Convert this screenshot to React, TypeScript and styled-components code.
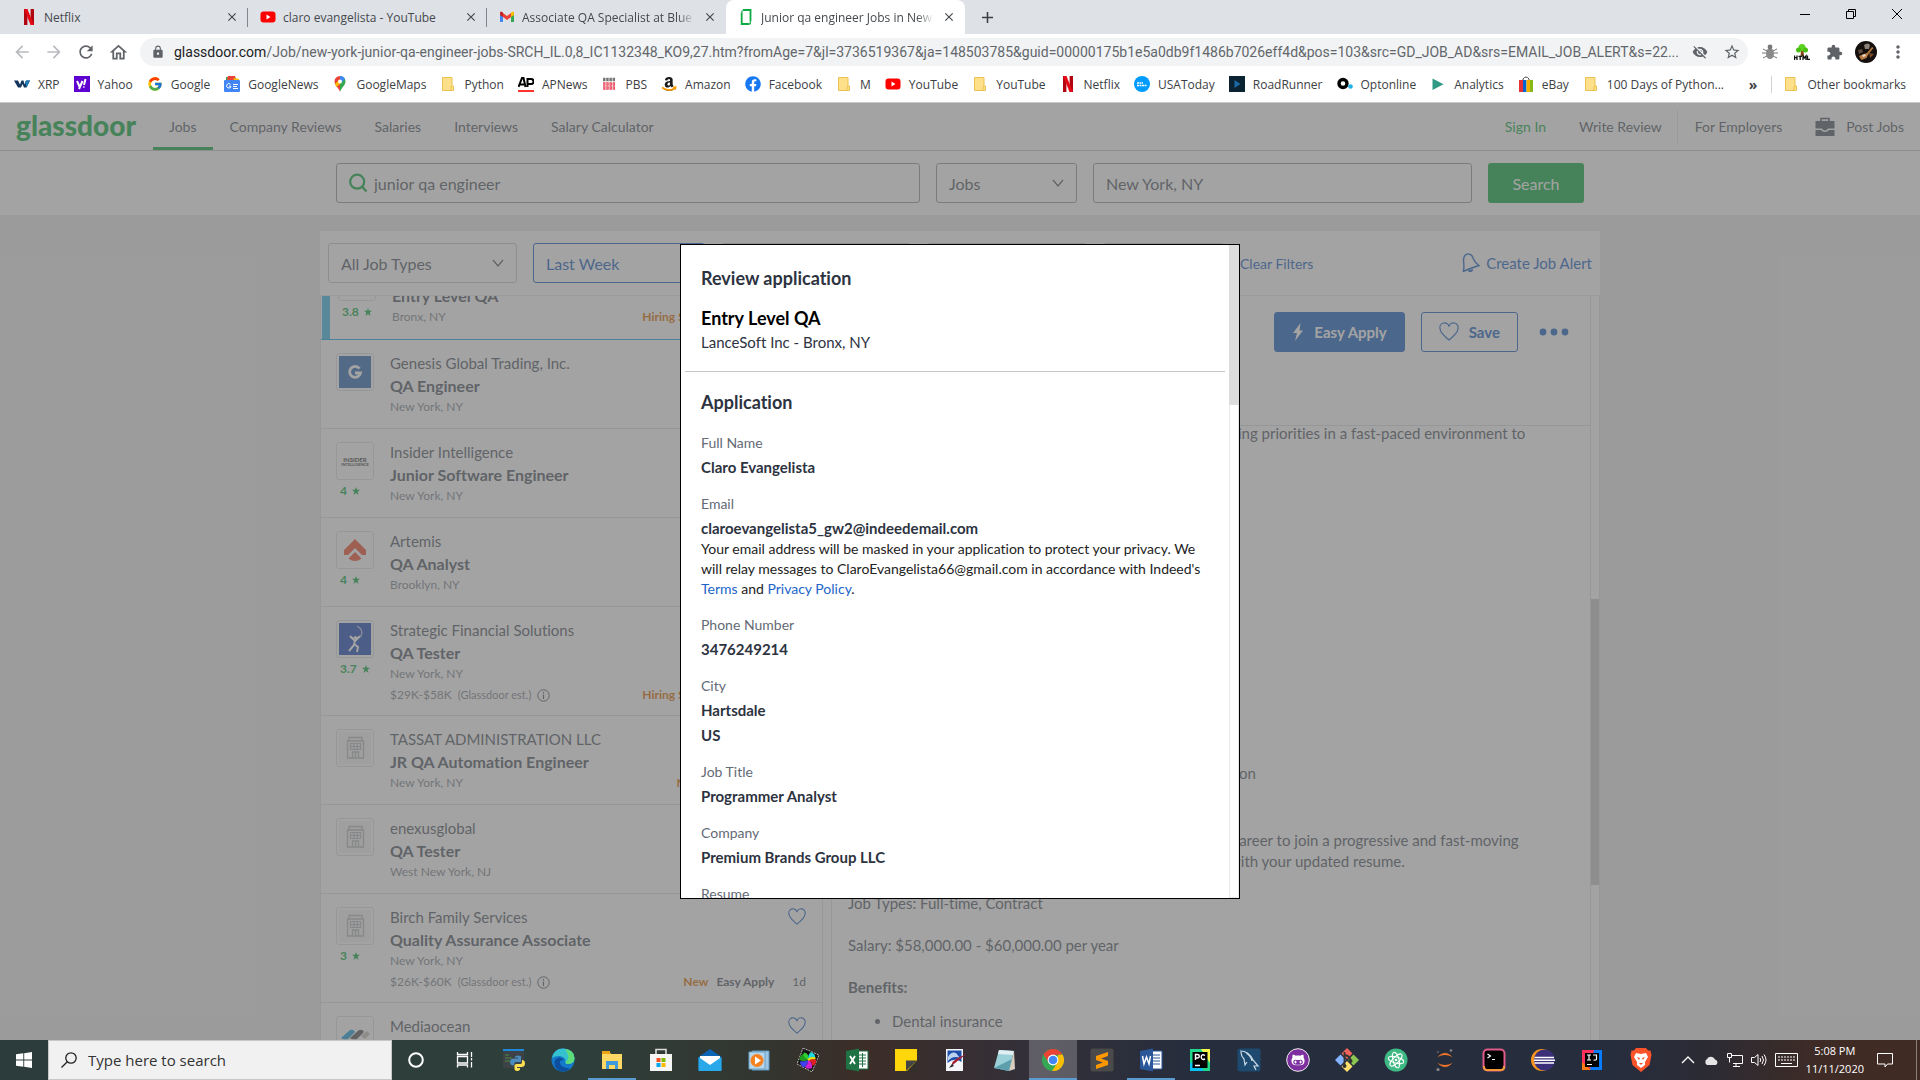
import React from "react";
import styled, { createGlobalStyle, css } from "styled-components";
import {
  MdArrowBack, MdArrowForward, MdRefresh, MdOutlineHome, MdLock, MdExtension,
  MdStarBorder, MdMoreVert, MdVisibilityOff, MdClose, MdAdd,
} from "react-icons/md";
import { FaFacebook, FaAmazon, FaGithubAlt } from "react-icons/fa";
import { FcGoogle } from "react-icons/fc";

const ui = '"Open Sans", "Noto Sans", sans-serif';
const lato = 'Lato, "Liberation Sans", sans-serif';
const green = "#0caa41";
const blue = "#1861bf";

const Global = createGlobalStyle`
  * { box-sizing: border-box; }
  html, body { margin: 0; overflow: hidden; }
  body { font-family: ${lato}; color: #505863; font-variant-ligatures: none; }
  button, input, select { font: inherit; color: inherit; margin: 0; }
  button { background: none; border: 0; padding: 0; }
  a { color: inherit; text-decoration: none; }
  h1, h2, h3, p, ul, dl, dd { margin: 0; padding: 0; }
  svg { display: block; flex: none; }
`;

const Screen = styled.div`
  height: 100vh;
  display: flex;
  flex-direction: column;
`;

/* ---------- browser frame ---------- */

const Browser = styled.header`
  flex: none;
  font-family: ${ui};
  background: #fff;
  border-bottom: 1px solid #c8c8c8;
`;
const TabStrip = styled.div`
  display: flex;
  height: 34px;
  background: #dee1e6;
`;
const Tab = styled.div<{ $active?: boolean; $line?: boolean }>`
  display: flex;
  align-items: center;
  gap: 7px;
  width: 239px;
  padding: 0 8px 0 12px;
  font-size: 12px;
  color: #45494d;
  &:first-child { width: 248px; padding-left: 21px; }
  ${(p) => p.$line && css`
    background: linear-gradient(#80868b, #80868b) right 8px / 1px 19px no-repeat;
  `}
  ${(p) => p.$active && css`
    background: #fff;
    border-radius: 8px 8px 0 0;
  `}
`;
const TabTitle = styled.a<{ $fade?: boolean }>`
  flex: 1;
  min-width: 0;
  overflow: hidden;
  white-space: nowrap;
  ${(p) => p.$fade && css`
    mask-image: linear-gradient(90deg, #000 90%, transparent 100%);
  `}
`;
const IconButton = styled.button<{ $w?: number; $c?: string }>`
  display: flex;
  align-items: center;
  justify-content: center;
  flex: none;
  width: ${(p) => p.$w ?? 32}px;
  height: 100%;
  color: ${(p) => p.$c ?? "#5f6368"};
`;
const WindowButtons = styled.div`
  display: flex;
  height: 28px;
  margin-left: auto;
`;
const Toolbar = styled.div`
  display: flex;
  align-items: center;
  height: 36px;
  padding: 0 6px;
`;
const Omnibox = styled.label`
  flex: 1;
  min-width: 0;
  display: flex;
  align-items: center;
  height: 28px;
  margin: 0 6px;
  padding-left: 11px;
  border-radius: 14px;
  background: #f1f3f4;
  color: #202124;
  font-family: Roboto, "Open Sans", sans-serif;
  font-size: 14px;
  svg { color: #5f6368; }
`;
const Domain = styled.span`
  margin-left: 9px;
`;
const UrlInput = styled.input`
  flex: 1;
  min-width: 0;
  padding: 0;
  border: 0;
  outline: 0;
  background: none;
  color: #63676c;
  text-overflow: ellipsis;
`;
const Bookmarks = styled.nav`
  display: flex;
  align-items: center;
  height: 32px;
  padding: 0 14px 4px;
  gap: 14px;
  font-size: 12px;
  color: #3c4043;
`;
const Bookmark = styled.a`
  display: flex;
  align-items: center;
  gap: 8px;
  white-space: nowrap;
`;
const BookmarkEnd = styled.div`
  display: flex;
  align-items: center;
  gap: 14px;
  margin-left: auto;
  & > span { font-weight: 700; font-size: 14px; }
  & > a { border-left: 1px solid #cfd1d4; padding-left: 11px; }
`;

/* ---------- job site ---------- */

const Site = styled.main`
  position: relative;
  flex: 1;
  min-height: 0;
  overflow: hidden;
  display: flex;
  flex-direction: column;
  background: #ebebeb;
`;
const SiteNav = styled.nav`
  flex: none;
  display: flex;
  align-items: stretch;
  gap: 1px;
  height: 48px;
  padding: 0 16px;
  background: #fff;
  border-bottom: 1px solid #c4c7cc;
  font-size: 14px;
`;
const Wordmark = styled.a`
  width: 136px;
  font-size: 28px;
  line-height: 44px;
  font-weight: 900;
  color: ${green};
`;
const NavLink = styled.a<{ $active?: boolean; $green?: boolean; $rule?: boolean }>`
  display: flex;
  align-items: center;
  gap: 11px;
  padding: 0 16px;
  padding-top: ${(p) => (p.$active ? 3 : 0)}px;
  border-bottom: ${(p) => (p.$active ? `3px solid ${green}` : "0")};
  color: ${(p) => (p.$green ? green : "inherit")};
  ${(p) => p.$rule && css`
    background: linear-gradient(#e8e8e8, #e8e8e8) right center / 1px 34px no-repeat;
  `}
  &:last-child { padding-right: 0; }
`;
const Push = styled.div`
  flex: 1;
`;
const SearchBar = styled.form`
  flex: none;
  display: flex;
  justify-content: center;
  gap: 16px;
  padding: 12px 336px;
  background: #fff;
  font-size: 16px;
`;
const Field = styled.label<{ $grow?: number; $w?: number; $blue?: boolean; $soft?: boolean }>`
  display: flex;
  align-items: center;
  gap: 5px;
  height: 40px;
  flex: ${(p) => (p.$grow ? `${p.$grow} 1 ${p.$grow}px` : "none")};
  ${(p) => p.$w && css`width: ${p.$w}px;`}
  padding: 0 12px;
  border: 1px solid ${(p) => (p.$blue ? blue : p.$soft ? "#c4c7cc" : "#95989e")};
  border-radius: 3px;
  color: ${(p) => (p.$blue ? blue : "inherit")};
  input, select {
    flex: 1;
    min-width: 0;
    border: 0;
    padding: 0;
    outline: 0;
    background: none;
    appearance: none;
  }
`;
const PrimaryButton = styled.button`
  width: 96px;
  height: 40px;
  border-radius: 3px;
  background: ${green};
  color: #fff;
`;
const Panel = styled.section`
  flex: 1;
  min-height: 0;
  display: flex;
  flex-direction: column;
  margin: 16px 320px 0;
  background: #fff;
`;
const Filters = styled.div`
  flex: none;
  display: flex;
  align-items: center;
  gap: 16px;
  padding: 12px 8px;
  height: 65px;
  border-bottom: 1px solid #eaebed;
  font-size: 16px;
`;
const FilterLink = styled.a<{ $size: number }>`
  display: flex;
  align-items: center;
  gap: 6px;
  font-size: ${(p) => p.$size}px;
  color: ${blue};
`;
const Columns = styled.div`
  flex: 1;
  min-height: 0;
  display: flex;
`;
const JobList = styled.ul`
  width: 503px;
  overflow: hidden;
  list-style: none;
  display: flex;
  flex-direction: column;
  justify-content: flex-start;
  border: 1px solid #dee0e3;
  border-width: 0 1px;
`;
const JobItem = styled.li<{ $current?: boolean }>`
  flex: none;
  display: flex;
  gap: 16px;
  padding: 13px 16px 10px 15px;
  border-bottom: 1px solid #dee0e3;
  ${(p) => p.$current && css`
    margin-top: -45px;
    padding: 12px 16px 11px 17px;
    border-bottom: 1px solid #1ba6df;
    background: linear-gradient(90deg, #fff 1px, #3cb8e8 1px, #3cb8e8 9px, #fff 9px);
  `}
`;
const LogoColumn = styled.div`
  width: 38px;
`;
const LogoBox = styled.div`
  display: flex;
  align-items: center;
  justify-content: center;
  height: 38px;
  border: 1px solid #dee0e3;
  border-radius: 3px;
`;
const Rating = styled.span`
  display: flex;
  align-items: center;
  gap: 5px;
  padding-left: 4px;
  font-size: 12px;
  line-height: 22px;
  font-weight: 700;
  color: ${green};
`;
const JobBody = styled.div`
  flex: 1;
  min-width: 0;
`;
const Line = styled.div`
  display: flex;
  justify-content: space-between;
  gap: 8px;
`;
const Company = styled(Line)`
  font-size: 15px;
  line-height: 20px;
`;
const JobTitle = styled.a`
  display: block;
  font-size: 16px;
  line-height: 26px;
  font-weight: 700;
`;
const Place = styled(Line)`
  font-size: 12px;
  line-height: 16px;
  margin-bottom: 3px;
  color: #7f868f;
`;
const Pay = styled(Place)`
  line-height: 20px;
  margin-bottom: 0;
`;
const PayText = styled.span`
  display: flex;
  align-items: center;
  gap: 6px;
`;
const Estimate = styled.span`
  font-size: 11px;
`;
const Meta = styled.span`
  display: flex;
  gap: 8px;
  font-weight: 700;
  color: #505863;
`;
const Hot = styled.span`
  color: #dc6f00;
`;
const Age = styled.span`
  padding-left: 10px;
  font-weight: 400;
`;
const Detail = styled.article`
  flex: 1;
  min-width: 0;
  margin-left: 8px;
  display: flex;
  flex-direction: column;
  border-left: 1px solid #dee0e3;
`;
const DetailHead = styled.div`
  flex: none;
  display: flex;
  justify-content: flex-end;
  gap: 16px;
  height: 130px;
  padding: 16px;
  border-bottom: 1px solid #dee0e3;
`;
const ActionButton = styled.button<{ $solid?: boolean }>`
  display: flex;
  align-items: center;
  justify-content: center;
  gap: 10px;
  height: 40px;
  padding: 0 17px;
  border: 1px solid ${blue};
  border-radius: 3px;
  font-size: 15px;
  font-weight: 700;
  background: ${(p) => (p.$solid ? blue : "transparent")};
  color: ${(p) => (p.$solid ? "#fff" : blue)};
`;
const MoreButton = styled.button`
  height: 40px;
  padding: 0 5px;
  color: ${blue};
`;
const Description = styled.div`
  flex: 1;
  min-height: 0;
  overflow: hidden;
  padding: 0 16px;
  font-size: 15px;
  line-height: 21px;
`;
const Block = styled.p<{ $gap?: number; $indent?: number; $bold?: boolean }>`
  margin-top: ${(p) => p.$gap ?? 0}px;
  padding-left: ${(p) => p.$indent ?? 0}px;
  font-weight: ${(p) => (p.$bold ? 700 : 400)};
  white-space: nowrap;
`;
const Bullets = styled.ul`
  margin-top: 13px;
  padding-left: 44px;
`;
const Track = styled.div`
  width: 10px;
  padding-top: 303px;
  border: 1px solid #dee0e3;
  border-width: 0 1px;
`;
const Thumb = styled.div`
  height: 286px;
  background: #c9c9c9;
`;

/* ---------- review dialog ---------- */

const Shade = styled.div`
  position: absolute;
  inset: 0;
  display: flex;
  align-items: center;
  justify-content: center;
  background: rgba(107, 107, 107, 0.62);
`;
const Dialog = styled.section`
  display: flex;
  width: 560px;
  height: 655px;
  max-height: 100%;
  border: 1px solid #000;
  background: #fff;
  color: #2d333f;
  overflow: hidden;
`;
const DialogBody = styled.div`
  flex: 1;
  min-width: 0;
  padding: 0 4px;
`;
const DialogHead = styled.div`
  padding: 21px 16px 17px;
  border-bottom: 1px solid #c4c7cc;
`;
const Heading = styled.h2<{ $black?: boolean }>`
  margin-bottom: ${(p) => (p.$black ? 0 : 16)}px;
  font-size: 18px;
  line-height: 24px;
  font-weight: 700;
  color: ${(p) => (p.$black ? "#000" : "inherit")};
`;
const SubHeading = styled.p`
  font-size: 15px;
  line-height: 24px;
`;
const DialogSection = styled.div`
  padding: 18px 16px 0;
`;
const Entry = styled.dl`
  display: flex;
  flex-direction: column;
  margin-bottom: 13px;
  dt { font-size: 14px; line-height: 26px; color: #646a75; }
  dd { font-size: 15px; line-height: 22px; font-weight: 700; }
  dd + dd { margin-top: 3px; }
`;
const Note = styled.p`
  font-size: 14px;
  line-height: 20px;
  color: #222;
  a { color: #2164c9; }
`;
const DialogTrack = styled.div`
  width: 10px;
  border: 1px solid #e8e8e8;
`;
const DialogThumb = styled.div`
  height: 160px;
  margin: -1px;
  background: #dcdcdc;
`;

/* ---------- taskbar ---------- */

const Taskbar = styled.footer`
  flex: none;
  display: flex;
  height: 40px;
  font-family: ${ui};
  color: #fff;
  background: linear-gradient(90deg, #2c3b3b 0%, #2e3f3b 30%, #33352f 40%, #3c2d28 45%, #33303a 54%, #262d3c 62%, #262d3d 84%, #2c2b34 89%, #3f2b25 95%, #402b24 100%);
`;
const StartButton = styled.button`
  width: 48px;
  display: flex;
  align-items: center;
  justify-content: center;
`;
const TaskSearch = styled.label`
  display: flex;
  align-items: center;
  gap: 11px;
  width: 344px;
  padding: 0 12px;
  background: #f1f1f1;
  border: 1px solid #c6c6c6;
  color: #222;
  font-size: 15px;
  input { flex: 1; min-width: 0; border: 0; padding: 0; background: none; outline: 0; }
  input::placeholder { color: #333; opacity: 1; }
`;
const Apps = styled.div`
  display: flex;
  gap: 1px;
`;
const AppButton = styled.button<{ $state?: "open" | "front" }>`
  width: 48px;
  display: flex;
  align-items: center;
  justify-content: center;
  background: ${(p) => (p.$state === "front" ? "rgba(255,255,255,0.22)" : "transparent")};
  box-shadow: ${(p) => (p.$state ? "inset 0 -2px #5a9bd0" : "none")};
`;
const Tray = styled.div`
  display: flex;
  align-items: center;
  gap: 8px;
  margin-left: auto;
  padding-right: 3px;
`;
const Clock = styled.time`
  font-size: 11px;
  line-height: 18px;
  text-align: center;
`;
const ShowDesktop = styled.button`
  width: 11px;
  height: 40px;
  border-right: 1px solid #8a7f7b;
`;

/* ---------- drawings ---------- */

type Draw = { s?: number; children?: React.ReactNode; w?: number; box?: string };
const Svg = ({ s = 16, w, box = "0 0 16 16", children }: Draw) => (
  <svg width={w ?? s} height={s} viewBox={box} aria-hidden="true">{children}</svg>
);
const Big = ({ children }: { children: React.ReactNode }) => (
  <Svg s={24} box="0 0 24 24">{children}</Svg>
);

const NetflixMark = () => (
  <Svg>
    <path d="M3 0h3.400v16H3zM9.600 0H13v16H9.600z" fill="#b1060f" />
    <path d="M3 0h3.400L13 16H9.600z" fill="#e50914" />
  </Svg>
);
const YouTubeMark = () => (
  <Svg>
    <rect x="0.500" y="2.500" width="15" height="11" rx="3" fill="#f00" />
    <path d="M6.500 5.500v5l4-2.500z" fill="#fff" />
  </Svg>
);
const GmailMark = () => (
  <Svg>
    <path d="M1 4v9h3V6.500z" fill="#4285f4" />
    <path d="M15 4v9h-3V6.500z" fill="#34a853" />
    <path d="M12 3.500l2-1q1 0 1 1.500v2l-3 2z" fill="#fbbc04" />
    <path d="M4 3.500l-2-1Q1 2.500 1 4v2l3 2z" fill="#c5221f" />
    <path d="M4 4l4 3 4-3v4l-4 3-4-3z" fill="#ea4335" />
  </Svg>
);
const GlassdoorMark = () => (
  <Svg>
    <path d="M4.800 1H12.500V12.500M11 15H3.700V3.500" fill="none" stroke="#0caa41" strokeWidth="1.800" />
    <path d="M4 3.500V1.500M12.300 12.500V15H10" fill="none" stroke="#0caa41" strokeWidth="1.200" />
  </Svg>
);
const FolderMark = () => (
  <Svg>
    <path d="M2.500 1.500h9.500v13H2.500z" fill="#ffe08a" stroke="#e9c250" />
    <path d="M12 10h1.500v4.500H11V11z" fill="#ffe08a" stroke="#e9c250" />
  </Svg>
);
const XrpMark = () => (
  <Svg>
    <path d="M0 4.500h4l2 4 1.500-4h2l1 4 1.500-4h4l-3.500 7H10L8.500 8 7 11.500H4z" fill="#12345c" />
    <path d="M11 6l1.500-1.500H16l-3.500 7z" fill="#1d7db5" />
  </Svg>
);
const YahooMark = () => (
  <Svg>
    <rect width="16" height="16" fill="#5f01d1" />
    <path d="M3 5l2.500 5.500M8.500 5L5 13M11.500 3L10 9M9.400 11h1" stroke="#fff" strokeWidth="2" fill="none" />
  </Svg>
);
const NewsMark = () => (
  <Svg>
    <path d="M2 1h9l3 4H2z" fill="#34a853" />
    <path d="M4 0h7l1 4H3z" fill="#ea4335" />
    <path d="M10 2l5 1v3H9z" fill="#fbbc04" />
    <rect y="4" width="16" height="12" rx="1" fill="#4285f4" />
    <path d="M6.500 8.400A2.200 2.200 0 1 0 7 10.300H5M9 8.500h5M9 10.500h4M9 12.500h5" stroke="#fff" fill="none" />
  </Svg>
);
const MapsMark = () => (
  <Svg>
    <path d="M8 16C7 12 2.500 9.500 2.500 5.500A5.500 5.500 0 0 1 8 0z" fill="#ea4335" />
    <path d="M8 0a5.500 5.500 0 0 1 5.500 5.500C13.500 9.500 9 12 8 16z" fill="#34a853" />
    <path d="M8 0a5.500 5.500 0 0 1 5 3L8 8z" fill="#4285f4" />
    <path d="M3 8l4-4 2 3-4.500 4z" fill="#fbbc04" />
    <circle cx="8" cy="5.500" r="2" fill="#fff" />
  </Svg>
);
const ApMark = () => (
  <Svg>
    <path d="M0.500 11L4 2h1.500L7.500 11M2 8.500h4M9.500 11V3h3.500a2 2 0 0 1 0 5H10" stroke="#000" strokeWidth="2" fill="none" />
    <path d="M0 14h16v2H0z" fill="#ff322e" />
  </Svg>
);
const PbsMark = () => (
  <Svg>
    <path d="M2 3.500h12" stroke="#777" strokeWidth="3.500" strokeDasharray="2.500 0.700" />
    <path d="M2 8h12M2 12h12" stroke="#e8475a" strokeWidth="3.400" strokeDasharray="2.500 0.700" />
    <path d="M2 8h12M2 12h12" stroke="#f9c9cf" strokeWidth="0.800" strokeDasharray="1.500 1.700" />
  </Svg>
);
const UsaMark = () => (
  <Svg>
    <circle cx="8" cy="8" r="8" fill="#009bff" />
    <path d="M3 7h6M3 9.500h10" stroke="#fff" strokeWidth="1.500" strokeDasharray="2 0.500" />
  </Svg>
);
const RoadMark = () => (
  <Svg><rect width="16" height="16" fill="#0b2233" /><path d="M5.500 4v8l6-4z" fill="#1c68a6" /></Svg>
);
const OptMark = () => (
  <Svg>
    <circle cx="6" cy="7.500" r="4" fill="none" stroke="#000" strokeWidth="3.400" />
    <circle cx="13.500" cy="10.500" r="2.300" fill="#1db3e6" />
  </Svg>
);
const AnalyticsMark = () => <Svg><path d="M2.500 2.500v11.500l11-5.700z" fill="#2f9a83" /></Svg>;
const EbayMark = () => (
  <Svg>
    <path d="M5 5V3q3-4 6 0v2" stroke="#444" fill="none" />
    <path d="M1 4h4v12H1z" fill="#e53238" /><path d="M5 4h3.500v12H5z" fill="#0064d2" />
    <path d="M8.500 4H12v12H8.500z" fill="#f5af02" /><path d="M12 4h3v12h-3z" fill="#86b817" />
  </Svg>
);
const AmazonMark = () => (
  <Svg>
    <FaAmazon size={16} color="#1a1a1a" />
    <path d="M1 11.500q7 5 13 0.500M12 11.200l2.700-.2-.5 2.700" fill="none" stroke="#ff9900" strokeWidth="1.600" />
  </Svg>
);
const FacebookMark = () => <FaFacebook size={16} color="#1778f2" />;
const GoogleMark = () => <FcGoogle size={16} />;

const BugMark = () => (
  <Svg>
    <ellipse cx="8" cy="9.500" rx="4" ry="5.500" fill="#8a8a8a" />
    <circle cx="8" cy="3" r="2.400" fill="#777" />
    <path d="M1 5l4 2M0 9h4M1 14l4-2M15 5l-4 2M16 9h-4M15 14l-4-2" stroke="#777" />
  </Svg>
);
const TreeMark = () => (
  <Svg>
    <path d="M7 6h2.500l0.500 6H6.500z" fill="#8a4b1c" />
    <circle cx="8" cy="3.500" r="3.500" fill="#5bd21b" /><circle cx="4.500" cy="6" r="2.500" fill="#49bd13" />
    <circle cx="11.500" cy="6" r="2.500" fill="#49bd13" />
    <path d="M0.500 11.500v4.500M3 11.500v4.500M0.500 13.700H3M4.500 12.300H8M6.200 12v4M9 16v-4l1.500 2 1.500-2v4M13.500 11.500v3.800h2.500" stroke="#111" strokeWidth="1.300" fill="none" />
  </Svg>
);
const Avatar = () => (
  <Svg s={22} box="0 0 22 22">
    <circle cx="11" cy="11" r="11" fill="#15100e" />
    <path d="M9 4q4-3 6 0l-1 4h-4z" fill="#8a8078" />
    <path d="M4 15l5-2 3-1 5-6 1.500 1-5 6-2 4-5 2z" fill="#b97c42" />
    <path d="M7 14l3-1 1 2-3 1z" fill="#e7d9c8" />
    <path d="M14 12l5 1-4 4z" fill="#7c4a27" />
    <path d="M3 9l4-1 1 3-4 2z" fill="#5b4a3d" />
  </Svg>
);
const Search = ({ c, s = 20 }: { c: string; s?: number }) => (
  <Svg s={s} box="0 0 20 20">
    <circle cx="8.200" cy="8.700" r="7" fill="none" stroke={c} strokeWidth="2.200" />
    <path d="M13 13.500l4.500 5" stroke={c} strokeWidth="2.400" />
  </Svg>
);
const Chevron = () => (
  <Svg s={12} box="0 0 12 12">
    <path d="M1 3l5 6 5-6" fill="none" stroke="#505863" strokeWidth="1.200" />
  </Svg>
);
const Heart = ({ s = 18 }: { s?: number }) => (
  <Svg s={s} box="0 0 20 20">
    <path d="M10 18C5 14 1 10.500 1 6.500A4.600 4.600 0 0 1 10 4.500a4.600 4.600 0 0 1 9 2C19 10.500 15 14 10 18z" fill="none" stroke={blue} strokeWidth="1.200" />
  </Svg>
);
const Star = () => (
  <Svg s={8} box="0 0 10 10"><path d="M5 0l1.300 3.500H10L7 5.900 8.200 10 5 7.500 1.800 10 3 5.900 0 3.500h3.700z" fill={green} /></Svg>
);
const Info = () => (
  <Svg s={13} box="0 0 13 13">
    <circle cx="6.500" cy="6.500" r="5.700" fill="none" stroke="#505863" />
    <path d="M6.500 5.500v4.500M6.500 3v1.400" stroke="#505863" strokeWidth="1.200" />
  </Svg>
);
const Briefcase = () => (
  <Svg s={20} box="0 0 20 20">
    <path d="M6 4V1.500h8V4" fill="none" stroke="#505863" strokeWidth="1.600" />
    <path d="M0.500 4h19v7.500h-6.500q-1 2-3 2t-3-2H0.500zM0.500 13h5.500q1.500 2 4 2t4-2h5.500v6h-19z" fill="#505863" />
  </Svg>
);
const Bell = () => (
  <Svg s={20} w={18} box="0 0 18 20">
    <path d="M1 18.500Q2.500 17 1.500 7 2 0.700 6.500 1q3.500 0 5 5 1.500 4 5.500 6.500Q9 15 1 18.500z" fill="none" stroke={blue} strokeWidth="1.400" />
    <path d="M6 17.500l5-1.500q0 3.500-3 3-2 0-2-1.500z" fill={blue} />
  </Svg>
);
const Bolt = () => (
  <Svg s={18} w={12} box="0 0 12 18"><path d="M8.500 0L1 10h4L3 18l8-10.500H7.500z" fill="#fff" /></Svg>
);
const Dots = () => (
  <Svg s={8} w={30} box="0 0 30 8">
    <circle cx="4" cy="4" r="3.400" fill={blue} /><circle cx="15" cy="4" r="3.400" fill={blue} /><circle cx="26" cy="4" r="3.400" fill={blue} />
  </Svg>
);

const GenesisLogo = () => (
  <Svg s={32} box="0 0 32 32">
    <rect width="32" height="32" fill="#2f6bb5" />
    <path d="M20.500 12.500a5.500 5.500 0 1 0 1 4.500H16" fill="none" stroke="#fff" strokeWidth="2.800" />
  </Svg>
);
const InsiderLogo = () => (
  <Svg s={32} box="0 0 32 32">
    <g fill="#333" fontFamily="Lato, sans-serif" textAnchor="middle">
      <text x="16" y="17" fontSize="6" fontWeight="700">INSIDER</text>
      <text x="16" y="21" fontSize="4" fontWeight="700">INTELLIGENCE</text>
    </g>
  </Svg>
);
const ArtemisLogo = () => (
  <Svg s={32} box="0 0 32 32">
    <path d="M16 5l11 11v5h-4l-7-7-7 7H5v-5z" fill="#f0502c" />
    <path d="M16 18l6.500 6.500q-6.500 5-13 0z" fill="#f0502c" />
  </Svg>
);
const StrategicLogo = () => (
  <Svg s={32} box="0 0 32 32">
    <rect width="32" height="32" fill="#1b49b8" />
    <path d="M18 3q7 4 4 10-4 4-11 1" fill="none" stroke="#b9c4df" strokeWidth="1.400" />
    <path d="M21 13l-5 5-5-5M16 17l-1 5-5 6M15 21l4 3-1 5" fill="none" stroke="#fff" strokeWidth="2" />
    <circle cx="16.500" cy="14.500" r="1.600" fill="#fff" />
  </Svg>
);
const BuildingLogo = () => (
  <Svg s={32} box="0 0 32 32">
    <rect width="32" height="32" fill="#f5f5f5" />
    <path d="M8.500 9h16v17h-16zM10 5.500h13V9H10zM13.500 26v-6h6v6M16.500 20v6" fill="none" stroke="#b4b7bb" strokeWidth="1.300" />
    <path d="M11.500 11.500h10v6h-10zM11.500 14.500h10M15 11.500v6M18.300 11.500v6" fill="none" stroke="#b4b7bb" strokeWidth="1.200" />
  </Svg>
);
const MediaLogo = () => (
  <Svg s={32} box="0 0 32 32">
    <path d="M22 17l6-5 3 3-5 5z" fill="#c8c3b8" />
    <path d="M2 19l9-8q4-1 5 2l-7 7q-5 1-7-1z" fill="#17a0dc" />
    <path d="M11 19l9-8q4-1 5 2l-7 7q-5 1-7-1z" fill="#555" />
  </Svg>
);
const LanceLogo = () => <Svg s={32} box="0 0 32 32"><circle cx="16" cy="14" r="8" fill="#7aa5d8" /></Svg>;

const apps: { name: string; state?: "open" | "front"; art: React.ReactNode }[] = [
  { name: "Cortana", art: <Big><circle cx="12" cy="12" r="6.800" fill="none" stroke="#fff" strokeWidth="2" /></Big> },
  { name: "Task view", art: <Big><path d="M4.500 4v2.500h10V4M4.500 19.500V17h10v2.500M4.500 8.500h10v6.500h-10zM18.500 4v5M18.500 14v5.500M18.500 10v2.500" fill="none" stroke="#fff" strokeWidth="1.300" /></Big> },
  { name: "Python", art: <Big><path d="M1 1h21v19H1z" fill="#3d4246" /><path d="M1 1h21v2H1z" fill="#1e88d8" /><path d="M3 7h4M3 10h7M3 13h5" stroke="#4a8b42" /><path d="M13 9q0-1.500 3-1.500t3 1.500v5h-5q-2 0-2 3.500-4 0-4-3.500t4-3.500h4v-1h-3z" fill="#4b8bbe" /><path d="M20 12q3 0 3 3.500T19 19h-4v1h3v1.500q-1 1.500-3 1.500-2.500 0-2.500-2v-3.500q0-1.500 2-1.500h4q1.500 0 1.500-2z" fill="#ffe052" /></Big> },
  { name: "Edge", art: <Big><circle cx="12" cy="12" r="11.500" fill="#1479c9" /><path d="M1 10Q3 0.500 12 0.500 23 1 23.500 10q0 6-7 6-3 0-2-3 0-4-6-5-5 0-7.500 2z" fill="#35c1d0" /><path d="M14 1q9 1 9.500 9 0 6-7 6-2 0-2-2 6-4-0.500-13z" fill="#5fdc7a" /><path d="M9 13q-1 7 10 7.500-4 4-10 2.500-7-3-5-11 5-5 9 0-3 0-4 1z" fill="#0c4f9e" /></Big> },
  { name: "File Explorer", state: "open", art: <Big><path d="M2 3h7l2 3h11v15H2z" fill="#ffd765" /><path d="M2 3h8v3H2z" fill="#e8a317" /><path d="M6 21v-8h12v8h-3v-4H9v4z" fill="#3f9bdc" /></Big> },
  { name: "Store", art: <Big><path d="M7 6V1.500h10V6" fill="none" stroke="#ddd" strokeWidth="1.600" /><path d="M1 6h22v17H1z" fill="#f5f5f5" /><path d="M7.500 10h4v4h-4z" fill="#f25022" /><path d="M12.500 10h4v4h-4z" fill="#7fba00" /><path d="M7.500 15h4v4h-4z" fill="#00a4ef" /><path d="M12.500 15h4v4h-4z" fill="#ffb900" /></Big> },
  { name: "Mail", art: <Big><path d="M0.500 9L12 1l11.500 8v13H0.500z" fill="#0b64b4" /><path d="M2 8h20v10H2z" fill="#fff" /><path d="M0.500 9L12 17l11.500-8v14H0.500z" fill="#29a8ea" /></Big> },
  { name: "Media Player", art: <Big><path d="M5 3h17v19H5z" fill="#9cc6e4" stroke="#5f97bf" /><path d="M2 4h16v17H2z" fill="#b9d6ea" stroke="#6ba1c8" /><circle cx="10" cy="12.500" r="6.500" fill="#f5821f" /><path d="M8 8.500v8l6-4z" fill="#fff" /></Big> },
  { name: "Pinwheel", art: <Big><path d="M7 0l16 7-7 17L1 16z" fill="#1a1a1a" stroke="#bbb" strokeWidth="1" strokeDasharray="2 1" /><circle cx="12" cy="12" r="8.500" fill="#111" /><path d="M12 12Q5 9 8 4.500q6 1 4 7.500z" fill="#2fd02f" /><path d="M12 12q0-6 3-8 5 2 4 6-4-1-7 2z" fill="#20d8e0" /><path d="M12 12q5-2 8.500 0-.5 5-4 6 0-4-4.500-6z" fill="#e02020" /><path d="M12 12q5 2 4 8-5 2-7-1 3-3 3-7z" fill="#d020d0" /><path d="M12 12q0 5-4 7.500-4-2-4-6 5 0 8-1.500z" fill="#4040f0" /><path d="M12 12q-5 2-8.500 0 0-4 3-6 1 4 5.500 6z" fill="#1fa01f" /><path d="M12 12q3-3 7.500-1.500" stroke="#f0e000" strokeWidth="2" fill="none" /></Big> },
  { name: "Excel", art: <Big><path d="M12 3h11v18H12z" fill="#fff" stroke="#1f7244" /><path d="M14 7h7M14 10h7M14 13h7M14 16h7M17.500 5v14" stroke="#1f7244" /><path d="M1 3l13-2.500v23L1 21z" fill="#1f7244" /><path d="M5 8l5 8M10 8l-5 8" stroke="#fff" strokeWidth="1.800" /></Big> },
  { name: "Sticky Notes", art: <Big><path d="M1 1h22v11l-1 11H1z" fill="#ffd60a" /><path d="M12 23V12.500h11z" fill="#444" /><path d="M23 12.500V24H12z" fill="#33302c" /></Big> },
  { name: "Paint", art: <Big><path d="M3 1h17v22H3z" fill="#f4f6fa" /><path d="M4.500 2.500h14V14q-7-5-14 1z" fill="#1d4fa8" /><path d="M5 9q3-6 8-4l4 5q-7-3-12 3z" fill="#bcd3ef" /><path d="M23.500 6l-9 7-6 5 1-4 5-4z" fill="#a32035" /><path d="M6 20l3-4 2 2z" fill="#222" /></Big> },
  { name: "Notepad", art: <Big><path d="M7 2l15 1-5 20-15-3z" fill="#9ad0d8" /><path d="M7 2l15 1-1 4L6 6z" fill="#dfeff2" /><path d="M2 20l15 3 3-12z" fill="#5e9fae" /><path d="M17 23l5-20 1 18z" fill="#d8cfc0" /></Big> },
  { name: "Chrome", state: "front", art: <Big><circle cx="12" cy="12" r="11" fill="#34a853" /><path d="M2.500 6.500a11 11 0 0 1 19 0L12 7l-4.500 7.500z" fill="#ea4335" /><path d="M21.500 6.500A11 11 0 0 1 11 23l5.500-8.500L17 7z" fill="#fbbc05" /><circle cx="12" cy="12" r="5.400" fill="#fff" /><circle cx="12" cy="12" r="4.300" fill="#4285f4" /></Big> },
  { name: "Sublime Text", art: <Big><rect x="0.500" y="0.500" width="23" height="23" rx="2" fill="#4a4a4a" /><path d="M6 8l12-4v4l-7 2.500 7 2.500v4L6 21v-4l7-2.500L6 12z" fill="#ff9800" /></Big> },
  { name: "Word", state: "open", art: <Big><path d="M12 3h11v18H12z" fill="#fff" stroke="#2b579a" /><path d="M14 7h7M14 10h7M14 13h7M14 16h7" stroke="#2b579a" /><path d="M1 3l13-2.500v23L1 21z" fill="#2b579a" /><path d="M3.500 8l1.500 8 2.500-7 2.500 7L11.500 8" fill="none" stroke="#fff" strokeWidth="1.500" /></Big> },
  { name: "PyCharm", art: <Big><path d="M2 1h20v22H2z" fill="#21d789" /><path d="M13 1h9v14z" fill="#fcf84a" /><path d="M2 15h8l6 8H2z" fill="#07c3f2" /><path d="M4.500 4h15v16h-15z" fill="#000" /><path d="M7.500 12V6.500H9.500q1.800 0 1.800 1.700T9.500 10H8M17 7.500q-3.500-2-3.800 1.500.3 3.500 3.800 2M7 17.500h5" fill="none" stroke="#fff" strokeWidth="1.400" /></Big> },
  { name: "MySQL", art: <Big><rect x="0.500" y="0.500" width="23" height="23" rx="2" fill="#1d4a6e" /><path d="M3 3q9 0 13 9l5 6-4 0 2 4M4 4q0 4 3 7l1 6 2-3M9 5q5 3 6 8" fill="none" stroke="#c9dbe8" strokeWidth="1.200" /></Big> },
  { name: "GitHub", art: <Svg s={24} box="0 0 24 24"><circle cx="12" cy="12" r="11.300" fill="#7d2fa0" stroke="#eee" /><FaGithubAlt x={5} y={5} size={14} color="#fff" /></Svg> },
  { name: "Git", art: <Big><path d="M12 0l5.500 5.500L12 11 6.500 5.500z" fill="#f0635a" /><path d="M5.500 6.500L11 12l-5.500 5.500L0 12z" fill="#84b4ff" /><path d="M18.500 6.500L24 12l-5.500 5.500L13 12z" fill="#8cc751" /><path d="M12 13l5.500 5.500L12 24l-5.500-5.500z" fill="#ffe16b" /><path d="M9.500 4v15M9.500 7q6 1 6 6" fill="none" stroke="#333" strokeWidth="1.800" /><circle cx="9.500" cy="18" r="2" fill="#333" /><circle cx="15.500" cy="13" r="2" fill="#333" /></Big> },
  { name: "Atom", art: <Big><circle cx="12" cy="12" r="11.500" fill="#3fb983" /><g fill="none" stroke="#fff"><ellipse cx="12" cy="12" rx="8" ry="3" transform="rotate(15 12 12)" /><ellipse cx="12" cy="12" rx="8" ry="3" transform="rotate(75 12 12)" /><ellipse cx="12" cy="12" rx="8" ry="3" transform="rotate(135 12 12)" /></g><circle cx="12" cy="12" r="1.300" fill="#fff" /></Big> },
  { name: "Jupyter", art: <Big><path d="M4.500 9q7.500-8 15 0-7.500-4-15 0zM4.500 15q7.500 8 15 0-7.500 4-15 0z" fill="#f37726" /><circle cx="18" cy="2.500" r="1.300" fill="#888" /><circle cx="5" cy="21.500" r="1.600" fill="#888" /><circle cx="5" cy="4" r="0.800" fill="#888" /></Big> },
  { name: "Terminal", art: <Big><rect x="1.500" y="1.500" width="21" height="21" rx="4" fill="#000" stroke="#e05a8a" strokeWidth="2" /><path d="M2 18v1q0 3 3 3h14q3 0 3-3v-1" fill="none" stroke="#f09a3a" strokeWidth="2" /><path d="M5.500 6l3 2-3 2M10 11.500h3" fill="none" stroke="#fff" strokeWidth="1.200" /></Big> },
  { name: "Eclipse", art: <Big><circle cx="11" cy="12" r="11" fill="#f7941e" /><circle cx="13.500" cy="12" r="10.500" fill="#3a2f78" /><path d="M3.500 9.500h19.500M3 12.200h21M3.500 15h19.500" stroke="#fff" strokeWidth="1.600" /></Big> },
  { name: "IntelliJ IDEA", art: <Big><path d="M2 2h20v20H2z" fill="#fe315d" /><path d="M14 2h8v20H10z" fill="#087cfa" /><path d="M2 14v8h9z" fill="#f97a12" /><path d="M5 5h14v14H5z" fill="#000" /><path d="M7 7h4M9 7v5M7 12h4M13 7h3.500v4q0 1.500-3 1M7 16.500h5" fill="none" stroke="#fff" strokeWidth="1.200" /></Big> },
  { name: "Brave", art: <Big><path d="M7 0h10l2 2.500 2.500 0L22.500 7l-2 10-8.500 7-8.500-7L1.500 7l1-4.500H5z" fill="#fb542b" /><path d="M7 5l5 1 5-1 2 4-3 5 0 3-4 3-4-3 0-3-3-5z" fill="#fff" /><path d="M8 9l3 1-1 2zM16 9l-3 1 1 2zM10 15h4l-2 2z" fill="#fb542b" /></Big> },
];

const bookmarks: [string, () => React.ReactElement][] = [
  ["XRP", XrpMark], ["Yahoo", YahooMark], ["Google", GoogleMark], ["GoogleNews", NewsMark],
  ["GoogleMaps", MapsMark], ["Python", FolderMark], ["APNews", ApMark], ["PBS", PbsMark],
  ["Amazon", AmazonMark], ["Facebook", FacebookMark], ["M", FolderMark], ["YouTube", YouTubeMark],
  ["YouTube", FolderMark], ["Netflix", NetflixMark], ["USAToday", UsaMark], ["RoadRunner", RoadMark],
  ["Optonline", OptMark], ["Analytics", AnalyticsMark], ["eBay", EbayMark],
  ["100 Days of Python...", FolderMark],
];

type Job = {
  company: string; title: string; place: string; rating?: string; pay?: string;
  hot?: string; easy?: boolean; age: string; current?: boolean; logo: () => React.ReactElement;
};
const jobs: Job[] = [
  { company: "LanceSoft Inc", title: "Entry Level QA", place: "Bronx, NY", rating: "3.8", hot: "Hiring Surge", easy: true, age: "2d", current: true, logo: LanceLogo },
  { company: "Genesis Global Trading, Inc.", title: "QA Engineer", place: "New York, NY", age: "5d", logo: GenesisLogo },
  { company: "Insider Intelligence", title: "Junior Software Engineer", place: "New York, NY", rating: "4", age: "6d", logo: InsiderLogo },
  { company: "Artemis", title: "QA Analyst", place: "Brooklyn, NY", rating: "4", age: "5d", logo: ArtemisLogo },
  { company: "Strategic Financial Solutions", title: "QA Tester", place: "New York, NY", rating: "3.7", pay: "$29K-$58K", hot: "Hiring Surge", easy: true, age: "2d", logo: StrategicLogo },
  { company: "TASSAT ADMINISTRATION LLC", title: "JR QA Automation Engineer", place: "New York, NY", hot: "New", easy: true, age: "24h", logo: BuildingLogo },
  { company: "enexusglobal", title: "QA Tester", place: "West New York, NJ", age: "5d", logo: BuildingLogo },
  { company: "Birch Family Services", title: "Quality Assurance Associate", place: "New York, NY", rating: "3", pay: "$26K-$60K", hot: "New", easy: true, age: "1d", logo: BuildingLogo },
  { company: "Mediaocean", title: "QA Analyst", place: "New York, NY", age: "3d", logo: MediaLogo },
];

const JobRow = ({ job }: { job: Job }) => {
  const Logo = job.logo;
  const meta = (
    <Meta>
      {job.hot && <Hot>{job.hot}</Hot>}
      {job.easy && <span>Easy Apply</span>}
      <Age>{job.age}</Age>
    </Meta>
  );
  return (
    <JobItem $current={job.current}>
      <LogoColumn>
        <LogoBox><Logo /></LogoBox>
        {job.rating && <Rating>{job.rating}<Star /></Rating>}
      </LogoColumn>
      <JobBody>
        <Company>
          <span>{job.company}</span>
          <button aria-label={`Save ${job.title}`}><Heart /></button>
        </Company>
        <JobTitle href="#job">{job.title}</JobTitle>
        <Place><span>{job.place}</span>{!job.pay && meta}</Place>
        {job.pay && (
          <Pay>
            <PayText>{job.pay} <Estimate>(Glassdoor est.)</Estimate> <Info /></PayText>
            {meta}
          </Pay>
        )}
      </JobBody>
    </JobItem>
  );
};

const FilterSelect = ({ label, width, on }: { label: string; width: number; on?: boolean }) => (
  <Field $w={width} $blue={on} $soft={!on}>
    <select aria-label={label} defaultValue={label}><option>{label}</option></select>
    <Chevron />
  </Field>
);

const tabs: { title: string; icon: () => React.ReactElement; active?: boolean; fade?: boolean; line?: boolean }[] = [
  { title: "Netflix", icon: NetflixMark, line: true },
  { title: "claro evangelista - YouTube", icon: YouTubeMark, line: true },
  { title: "Associate QA Specialist at Blue Apron", icon: GmailMark, fade: true },
  { title: "Junior qa engineer Jobs in New York", icon: GlassdoorMark, fade: true, active: true },
];

const fields: { label: string; values: string[]; note?: boolean }[] = [
  { label: "Full Name", values: ["Claro Evangelista"] },
  { label: "Email", values: ["claroevangelista5_gw2@indeedemail.com"], note: true },
  { label: "Phone Number", values: ["3476249214"] },
  { label: "City", values: ["Hartsdale", "US"] },
  { label: "Job Title", values: ["Programmer Analyst"] },
  { label: "Company", values: ["Premium Brands Group LLC"] },
  { label: "Resume", values: [] },
];

const line = { fill: "none", stroke: "#fff" };

export default function App() {
  return (
    <Screen>
      <Global />
      <Browser>
        <TabStrip>
          {tabs.map((t) => (
            <Tab key={t.title} $active={t.active} $line={t.line}>
              <t.icon />
              <TabTitle href="#tab" $fade={t.fade}>{t.title}</TabTitle>
              <IconButton $w={16} $c="#45494d" aria-label={`Close ${t.title}`}><MdClose size={14} /></IconButton>
            </Tab>
          ))}
          <IconButton $w={44} $c="#3c4043" aria-label="New tab"><MdAdd size={19} /></IconButton>
          <WindowButtons>
            <IconButton $w={46} aria-label="Minimize"><Svg s={10} box="0 0 10 10"><path d="M0 5.500h10" stroke="#000" /></Svg></IconButton>
            <IconButton $w={46} aria-label="Restore"><Svg s={10} box="0 0 10 10"><path d="M0.500 2.500h7v7h-7zM2.500 2.500v-2h7v7h-2" fill="none" stroke="#000" /></Svg></IconButton>
            <IconButton $w={46} aria-label="Close window"><Svg s={10} box="0 0 10 10"><path d="M0 0l10 10M10 0L0 10" stroke="#000" /></Svg></IconButton>
          </WindowButtons>
        </TabStrip>
        <Toolbar>
          <IconButton $c="#b9bbbe" aria-label="Back"><MdArrowBack size={20} /></IconButton>
          <IconButton $c="#b9bbbe" aria-label="Forward"><MdArrowForward size={20} /></IconButton>
          <IconButton aria-label="Reload"><MdRefresh size={20} /></IconButton>
          <IconButton aria-label="Home"><MdOutlineHome size={21} /></IconButton>
          <Omnibox>
            <MdLock size={14} />
            <Domain>glassdoor.com</Domain>
            <UrlInput
              aria-label="Address"
              readOnly
              value="/Job/new-york-junior-qa-engineer-jobs-SRCH_IL.0,8_IC1132348_KO9,27.htm?fromAge=7&jl=3736519367&ja=148503785&guid=00000175b1e5a0db9f1486b7026eff4d&pos=103&src=GD_JOB_AD&srs=EMAIL_JOB_ALERT&s=22..."
            />
            <IconButton aria-label="Cookies blocked"><MdVisibilityOff size={16} /></IconButton>
            <IconButton aria-label="Bookmark page"><MdStarBorder size={18} /></IconButton>
          </Omnibox>
          <IconButton aria-label="Bug"><BugMark /></IconButton>
          <IconButton aria-label="HTML tree"><TreeMark /></IconButton>
          <IconButton aria-label="Extensions"><MdExtension size={17} /></IconButton>
          <IconButton aria-label="Profile"><Avatar /></IconButton>
          <IconButton aria-label="Menu"><MdMoreVert size={20} /></IconButton>
        </Toolbar>
        <Bookmarks>
          {bookmarks.map(([name, Mark], i) => (
            <Bookmark href="#bookmark" key={i}><Mark />{name}</Bookmark>
          ))}
          <BookmarkEnd>
            <span>»</span>
            <Bookmark href="#bookmark"><FolderMark />Other bookmarks</Bookmark>
          </BookmarkEnd>
        </Bookmarks>
      </Browser>

      <Site>
        <SiteNav>
          <Wordmark href="#home">glassdoor</Wordmark>
          <NavLink href="#jobs" $active>Jobs</NavLink>
          <NavLink href="#reviews">Company Reviews</NavLink>
          <NavLink href="#salaries">Salaries</NavLink>
          <NavLink href="#interviews">Interviews</NavLink>
          <NavLink href="#calculator">Salary Calculator</NavLink>
          <Push />
          <NavLink href="#signin" $green>Sign In</NavLink>
          <NavLink href="#write" $rule>Write Review</NavLink>
          <NavLink href="#employers">For Employers</NavLink>
          <NavLink href="#post"><Briefcase />Post Jobs</NavLink>
        </SiteNav>
        <SearchBar>
          <Field $grow={584}>
            <Search c={green} />
            <input aria-label="Keyword" defaultValue="junior qa engineer" />
          </Field>
          <Field $w={141}>
            <select aria-label="Search type" defaultValue="Jobs"><option>Jobs</option></select>
            <Chevron />
          </Field>
          <Field $grow={379}>
            <input aria-label="Location" defaultValue="New York, NY" />
          </Field>
          <PrimaryButton type="button">Search</PrimaryButton>
        </SearchBar>

        <Panel>
          <Filters>
            <FilterSelect label="All Job Types" width={189} />
            <FilterSelect label="Last Week" width={172} on />
            <FilterSelect label="All Salaries" width={190} />
            <FilterSelect label="All Distances" width={160} />
            <FilterSelect label="More" width={121} />
            <FilterLink href="#clear" $size={14}>Clear Filters</FilterLink>
            <Push />
            <FilterLink href="#alert" $size={15}><Bell />Create Job Alert</FilterLink>
          </Filters>
          <Columns>
            <JobList>
              {jobs.map((job) => <JobRow key={job.company} job={job} />)}
            </JobList>
            <Detail>
              <DetailHead>
                <ActionButton $solid><Bolt />Easy Apply</ActionButton>
                <ActionButton><Heart s={20} />Save</ActionButton>
                <MoreButton aria-label="More actions"><Dots /></MoreButton>
              </DetailHead>
              <Description>
                <Block $gap={-3} $indent={390}>ing priorities in a fast-paced environment to</Block>
                <Block $gap={319} $indent={391}>on</Block>
                <Block $gap={46} $indent={384}>career to join a progressive and fast-moving</Block>
                <Block $indent={381}>with your updated resume.</Block>
                <Block $gap={21}>Job Types: Full-time, Contract</Block>
                <Block $gap={21}>Salary: $58,000.00 - $60,000.00 per year</Block>
                <Block $gap={21} $bold>Benefits:</Block>
                <Bullets><li>Dental insurance</li></Bullets>
              </Description>
            </Detail>
            <Track><Thumb /></Track>
          </Columns>
        </Panel>

        <Shade>
          <Dialog role="dialog" aria-label="Review application">
            <DialogBody>
              <DialogHead>
                <Heading>Review application</Heading>
                <Heading $black>Entry Level QA</Heading>
                <SubHeading>LanceSoft Inc - Bronx, NY</SubHeading>
              </DialogHead>
              <DialogSection>
                <Heading>Application</Heading>
                {fields.map((f) => (
                  <Entry key={f.label}>
                    <dt>{f.label}</dt>
                    {f.values.map((v) => <dd key={v}>{v}</dd>)}
                    {f.note && (
                      <Note>
                        Your email address will be masked in your application to protect your privacy. We
                        will relay messages to ClaroEvangelista66@gmail.com in accordance with Indeed's{" "}
                        <a href="#terms">Terms</a> and <a href="#privacy">Privacy Policy</a>.
                      </Note>
                    )}
                  </Entry>
                ))}
              </DialogSection>
            </DialogBody>
            <DialogTrack><DialogThumb /></DialogTrack>
          </Dialog>
        </Shade>
      </Site>

      <Taskbar>
        <StartButton aria-label="Start">
          <Svg><path d="M0 2.300L7.300 1.300v6.300H0zM8.200 1.200L16 0v7.600H8.200zM0 8.400h7.300v6.300L0 13.700zM8.200 8.400H16V16l-7.800-1.200z" fill="#fff" /></Svg>
        </StartButton>
        <TaskSearch>
          <Svg><circle cx="10" cy="6" r="5.200" fill="none" stroke="#222" strokeWidth="1.300" /><path d="M6.300 9.700L0.500 15.500" stroke="#222" strokeWidth="1.300" /></Svg>
          <input aria-label="Search Windows" placeholder="Type here to search" />
        </TaskSearch>
        <Apps>
          {apps.map((a) => <AppButton key={a.name} $state={a.state} aria-label={a.name}>{a.art}</AppButton>)}
        </Apps>
        <Tray>
          <Svg s={14} box="0 0 14 14"><path d="M1 10l6-6 6 6" {...line} strokeWidth="1.400" /></Svg>
          <Svg><path d="M4 13a3.500 3.500 0 0 1 0-6 4.500 4.500 0 0 1 8 0.500 3 3 0 0 1 1 5.500z" fill="#e4e4e4" /></Svg>
          <Svg s={16}><path d="M4 3.500h11.500v8H6M9 11.500v3M6 14.500h7M0.500 1.500h4v4h-4zM2.500 5.500v5" {...line} /></Svg>
          <Svg s={16}><path d="M0.500 5.500h3l3.500-3v11l-3.500-3h-3z" {...line} /><path d="M9 6q1.500 2 0 4M11 4q3 4 0 8M13 2.500q4 5.500 0 11" {...line} /></Svg>
          <Svg s={14} w={23} box="0 0 23 14"><path d="M0.500 0.500h22v13h-22z" {...line} /><path d="M3 4h17M3 7h17" {...line} strokeDasharray="2 1" /><path d="M6 10.500h11" {...line} /></Svg>
          <Clock>5:08 PM<br />11/11/2020</Clock>
          <IconButton aria-label="Notifications" $w={26}><Svg><path d="M0.500 1.500h15v10.500h-5l-2.500 3v-3h-7.500z" {...line} /></Svg></IconButton>
          <ShowDesktop aria-label="Show desktop" />
        </Tray>
      </Taskbar>
    </Screen>
  );
}
